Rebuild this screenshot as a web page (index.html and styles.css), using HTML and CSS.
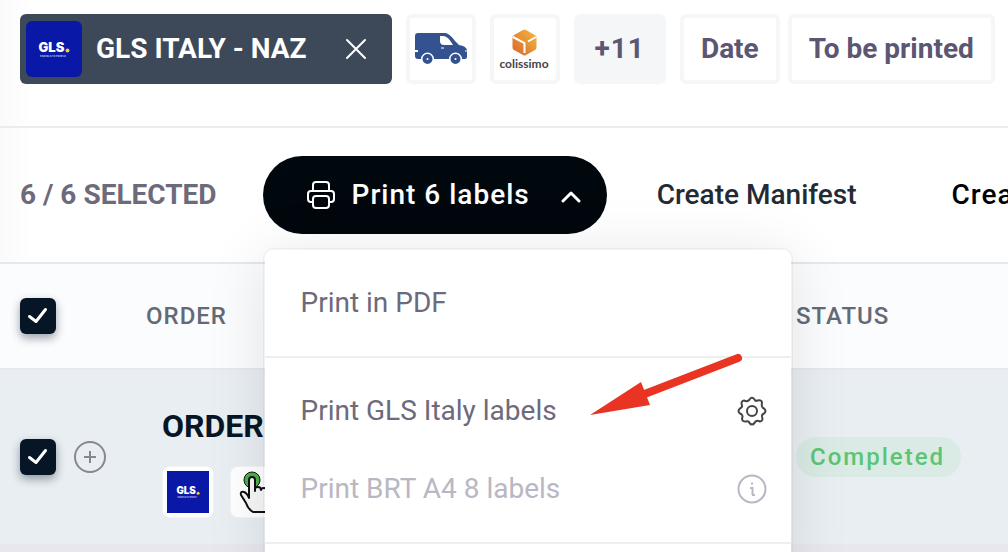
FILE: index.html
```html
<!DOCTYPE html>
<html lang="en">

<head>
    <meta charset="UTF-8">
    <meta name="viewport" content="width=device-width, initial-scale=1.0">
    <title>Orders</title>
    <link rel="stylesheet" href="styles.css">
</head>

<body>
    <header class="filters">
        <div class="chip chip-active">
            <svg class="chip-logo" viewBox="0 0 112 112">
                <rect width="112" height="112" fill="#0a18a8"/>
                <text x="25" y="62" class="gls-name">GLS</text>
                <circle cx="83" cy="59" r="4" fill="#ffc629"/>
                <text x="28" y="71" class="gls-tag">PARCELS TO PEOPLE</text>
            </svg>
            <span>GLS ITALY - NAZ</span>
            <button class="chip-close" aria-label="Remove filter">
                <svg width="22" height="22" viewBox="0 0 22 22"><path d="M2 2 20 20M20 2 2 20" stroke="#fff" stroke-width="2" stroke-linecap="round"/></svg>
            </button>
        </div>
        <button class="chip chip-icon" aria-label="Van courier">
            <svg width="52" height="32" viewBox="0 0 52 32">
                <path d="M3 0h27q4 0 10 8l4 4q7 1 8 5v7q0 2-2 2h-3a6.500 6.500 0 0 0-13 0H19a6.500 6.500 0 0 0-13 0H3q-3 0-3-3v-4h3v-2H0V3q0-3 3-3z" fill="#34528f"/>
                <path d="M25 3h3q5 0 10 9H29q-4 0-4-4z" fill="#fff"/>
                <path d="M26 15h3M50 18h2" stroke="#fff" stroke-width="1"/>
                <circle cx="12.500" cy="26" r="3" fill="#fff" stroke="#34528f" stroke-width="4"/>
                <circle cx="40.500" cy="26" r="3" fill="#fff" stroke="#34528f" stroke-width="4"/>
            </svg>
        </button>
        <button class="chip chip-icon" aria-label="Colissimo">
            <svg width="60" height="60" viewBox="0 0 60 60">
                <defs>
                    <linearGradient id="box" x1="0" y1="1" x2="1" y2="0">
                        <stop offset="0" stop-color="#d8642b"/>
                        <stop offset="1" stop-color="#f2bd42"/>
                    </linearGradient>
                </defs>
                <path d="M28 11q1.500-1 3 0l9 5q1.500 1 1.500 2.500v10q0 1.500-1.500 2.500l-9 5q-1.500 1-3 0l-9-5q-1.500-1-1.500-2.500V18.500q0-1.500 1.500-2.500z" fill="url(#box)"/>
                <path d="M18 18 29.500 24V34M33 22.500 41 18" fill="none" stroke="#fff" stroke-width="2"/>
                <text x="29" y="49" class="colissimo">colissimo</text>
            </svg>
        </button>
        <button class="chip chip-more">+11</button>
        <div class="filter-group">
            <button class="chip">Date</button>
            <button class="chip">To be printed</button>
        </div>
    </header>

    <section class="actions">
        <span class="selected">6 / 6 SELECTED</span>
        <div class="dropdown">
            <button class="btn-print" aria-expanded="true">
                <svg width="28" height="28" viewBox="0 0 28 28" fill="none" stroke="#fff" stroke-width="2" stroke-linejoin="round">
                    <path d="M6 9V4q0-3 3-3h10q3 0 3 3v5"/>
                    <path d="M6 21H4q-3 0-3-3v-5q0-3 3-3h20q3 0 3 3v5q0 3-3 3h-2"/>
                    <rect x="6" y="15" width="16" height="12" rx="3"/>
                </svg>
                <span>Print 6 labels</span>
                <svg class="caret" width="20" height="12" viewBox="0 0 20 12"><path d="M2 10 10 2 18 10" fill="none" stroke="#fff" stroke-width="3" stroke-linecap="round" stroke-linejoin="round"/></svg>
            </button>
            <div class="menu">
                <div class="menu-group">
                    <button class="menu-item">Print in PDF</button>
                </div>
                <div class="menu-group">
                    <button class="menu-item">
                        Print GLS Italy labels
                        <svg width="30" height="30" viewBox="0 0 30 30" fill="none" stroke="#444" stroke-width="2" stroke-linejoin="round">
                            <path d="M12.500 3.500Q15 0 17.500 3.500 18.500 5.500 20.500 4.500 25 3.500 25 7 24.500 8.500 25 10.500 25.500 12 27 12.500 30 15 27 17.500 24.500 18.500 25 20.500 26.500 25 23 25.500 21 24.500 19.500 25 18 25.500 17.500 27 15 30 12.500 27 11.500 24.500 9.500 25.500 5 26 5 22.500 6 20.500 5 19 4.500 18 3 17.500 0 15 3 12.500 5.500 11.500 5 9.500 3.500 5 7 4.500 9 5.500 10.500 5 12 4.500 12.500 3.500Z"/>
                            <circle cx="15" cy="15" r="5"/>
                        </svg>
                    </button>
                    <button class="menu-item" disabled>
                        Print BRT A4 8 labels
                        <svg width="30" height="30" viewBox="0 0 30 30" fill="none" stroke="#b9b7c3" stroke-width="2">
                            <circle cx="15" cy="15" r="13.500"/>
                            <path d="M13 14h2.500v7M15 21h3M14 9.500h2"/>
                        </svg>
                    </button>
                </div>
                <div class="menu-group"></div>
                <svg class="arrow" width="154" height="64" viewBox="0 0 154 64">
                    <path d="M52 43 148 6" stroke="#e93423" stroke-width="8" stroke-linecap="round"/>
                    <path d="M0 63 51 30 60 53Z" fill="#e93423"/>
                </svg>
            </div>
        </div>
        <a href="#" class="action-link">Create Manifest</a>
        <a href="#" class="action-link action-next">Create Pickup</a>
    </section>

    <table class="orders">
        <thead>
            <tr>
                <th class="col-check">
                    <label class="check">
                        <input type="checkbox" aria-label="Select all" checked>
                        <svg viewBox="0 0 36 36"><path d="M9.500 18.500 16 23.500 25.500 11.500"/></svg>
                    </label>
                </th>
                <th class="col-order">ORDER</th>
                <th>STATUS</th>
            </tr>
        </thead>
        <tbody>
            <tr>
                <td class="col-check">
                    <div class="row-tools">
                        <label class="check">
                            <input type="checkbox" aria-label="Select order" checked>
                            <svg viewBox="0 0 36 36"><path d="M9.500 18.500 16 23.500 25.500 11.500"/></svg>
                        </label>
                        <button class="expand" aria-label="Expand order">
                            <svg width="32" height="32" viewBox="0 0 32 32" fill="none" stroke="#87888c" stroke-width="2"><circle cx="16" cy="16" r="15"/><path d="M16 10v12M10 16h12"/></svg>
                        </button>
                    </div>
                </td>
                <td class="col-order">
                    <div class="order-name">ORDER1</div>
                    <div class="order-icons">
                        <span class="tile">
                            <svg width="42" height="42" viewBox="0 0 112 112">
                                <rect width="112" height="112" fill="#0a18a8"/>
                                <text x="25" y="62" class="gls-name">GLS</text>
                                <circle cx="83" cy="59" r="4" fill="#ffc629"/>
                                <text x="28" y="71" class="gls-tag">PARCELS TO PEOPLE</text>
                            </svg>
                        </span>
                        <span class="tile">
                            <svg width="42" height="42" viewBox="0 0 42 42">
                                <circle cx="17" cy="9" r="8" fill="#4cb04a" stroke="#111" stroke-width="1"/>
                                <path d="M14 27V9q0-3 3-3t3 3v11V18q0-2 3-2t3 3q0-2 3-2t3 3q0-2 3-1t3 4v10q0 4-4 8H18Q13 38 11 32L6 24Q5 20 9 21 12 22 14 27Z" fill="#f8f8f8" stroke="#111" stroke-width="2" stroke-linejoin="round"/>
                            </svg>
                        </span>
                    </div>
                </td>
                <td><span class="badge">Completed</span></td>
            </tr>
        </tbody>
    </table>
</body>

</html>
```

FILE: styles.css
```css
:root {
    --dark: #061626;
    --slate: #3d4958;
    --purple: #5c5672;
    --muted: #6d6a7c;
    --line: #e8edf1;
}

* {
    box-sizing: border-box;
}

body {
    font-family: Roboto, "Liberation Sans", sans-serif;
    font-size: 28px;
    line-height: 32px;
    margin: 0;
    background: linear-gradient(90deg, #fafafa, #fff 32px);
    overflow: hidden;
}

button {
    font: inherit;
    letter-spacing: inherit;
    color: inherit;
    background: none;
    border: none;
    padding: 0;
    cursor: pointer;
}

svg {
    display: block;
    flex-shrink: 0;
}

.gls-name {
    font: 900 26px Inter, sans-serif;
    letter-spacing: 0;
    fill: #fff;
}

.gls-tag {
    font: 700 5px Inter, sans-serif;
    letter-spacing: 0;
    fill: #c9cdf0;
}

.colissimo {
    font: 700 12px Lato, sans-serif;
    letter-spacing: 0;
    text-anchor: middle;
    fill: #444;
}

/* filters */
.filters {
    display: flex;
    gap: 14px;
    padding: 14px 14px 42px 20px;
    border-bottom: 2px solid var(--line);
    white-space: nowrap;
}

.filter-group {
    display: flex;
    gap: 8px;
}

.chip {
    display: flex;
    align-items: center;
    justify-content: center;
    flex-shrink: 0;
    height: 70px;
    padding: 0 17px;
    border: 4px solid #f5f6f8;
    border-radius: 6px;
    color: var(--purple);
    font-weight: 700;
}

.chip-active {
    gap: 14px;
    padding: 0 25px 0 6px;
    border: none;
    background-color: var(--slate);
    color: #fff;
}

.chip-logo {
    width: 56px;
    height: 56px;
    border-radius: 6px;
}

.chip-close {
    margin-left: 24px;
}

.chip-icon {
    width: 70px;
    padding: 0;
}

.chip-more {
    background-color: #f5f6f8;
    letter-spacing: 1px;
}

/* actions */
.actions {
    display: flex;
    align-items: center;
    padding: 28px 20px;
    border-bottom: 2px solid #e4e7ee;
    white-space: nowrap;
}

.selected {
    color: var(--muted);
    font-weight: 700;
}

.dropdown {
    position: relative;
    margin: 0 50px 0 46px;
}

.btn-print {
    display: flex;
    align-items: center;
    gap: 17px;
    height: 78px;
    padding: 0 26px 0 44px;
    border-radius: 40px;
    background-color: #00070d;
    color: #fff;
    font-weight: 500;
    letter-spacing: 1px;
}

.caret {
    margin: 4px 0 0 14px;
}

.action-link {
    color: #222a33;
    font-weight: 500;
    text-decoration: none;
}

.action-next {
    margin-left: 95px;
    color: #000;
    letter-spacing: 1px;
}

/* print menu */
.menu {
    position: absolute;
    top: 92px;
    left: 0;
    z-index: 10;
    width: 530px;
    border: 2px solid rgba(0, 0, 0, 0.04);
    border-radius: 10px;
    background-color: #fff;
    background-clip: padding-box;
    box-shadow: 0 6px 60px rgba(0, 0, 0, 0.1);
    color: var(--muted);
}

.menu-group {
    padding: 14px 0;
    border-bottom: 2px solid #eee;
}

.menu-item {
    display: flex;
    align-items: center;
    justify-content: space-between;
    width: 100%;
    height: 78px;
    padding: 0 24px 0 36px;
}

.menu-item:disabled {
    color: #b9b7c3;
    cursor: default;
}

.arrow {
    position: absolute;
    top: 102px;
    left: 325px;
}

/* orders table */
.orders {
    width: 100%;
    border-collapse: separate;
    border-spacing: 0;
}

.orders th {
    height: 106px;
    padding: 0;
    background-color: #fbfcfe;
    border-bottom: 2px solid #e8e7ed;
    color: #646a75;
    font-size: 24px;
    font-weight: 500;
    letter-spacing: 1px;
    text-align: left;
}

.orders td {
    height: 182px;
    padding: 0;
    background-color: #e9eef2;
    border-bottom: 8px solid #e8e7ed;
}

.orders .col-check {
    width: 146px;
    padding-left: 20px;
}

.orders .col-order {
    width: 650px;
}

.orders td.col-order {
    padding: 10px 0 0 16px;
}

.row-tools {
    display: flex;
    align-items: center;
    gap: 18px;
}

.check {
    position: relative;
    display: block;
    width: 36px;
    height: 36px;
}

.check input {
    appearance: none;
    display: block;
    width: 36px;
    height: 36px;
    margin: 0;
    border-radius: 6px;
    background-color: var(--dark);
    box-shadow: 0 4px 10px rgba(6, 22, 38, 0.4);
}

.check svg {
    position: absolute;
    top: 0;
    left: 0;
    width: 36px;
    height: 36px;
    fill: none;
    stroke: #fff;
    stroke-width: 3;
    stroke-linecap: round;
    stroke-linejoin: round;
    pointer-events: none;
}

.order-name {
    color: var(--dark);
    font-size: 32px;
    font-weight: 700;
    line-height: 40px;
}

.order-icons {
    display: flex;
    gap: 16px;
    margin-top: 20px;
}

.tile {
    padding: 4px;
    border: 1px solid #f3f4f6;
    border-radius: 8px;
    background-color: #fff;
}

.badge {
    display: inline-block;
    padding: 0 16px 0 14px;
    border-radius: 20px;
    background-color: #d9ebe4;
    color: #5cc474;
    font-size: 24px;
    font-weight: 500;
    letter-spacing: 2px;
    line-height: 40px;
}
```
